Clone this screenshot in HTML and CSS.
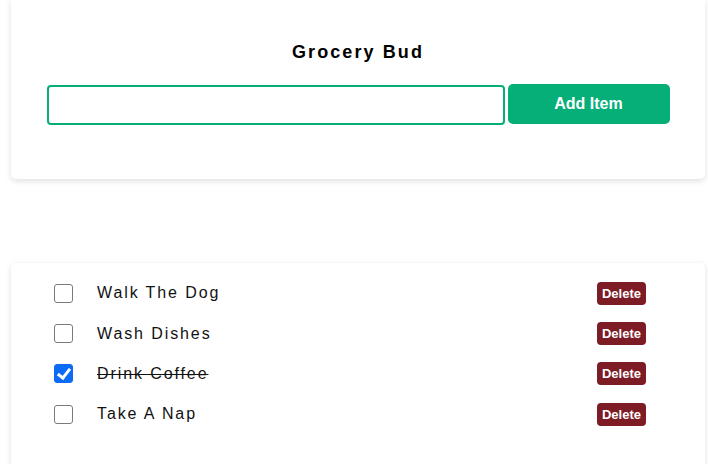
FILE: index.html
```html
<!DOCTYPE html>
<html>
<head>
<meta charset="utf-8">
<link rel="stylesheet" href="styles.css">
</head>
<body>
<main class="app">
  <section class="card top-card">
    <h1 class="title">Grocery Bud</h1>
    <form class="form">
      <input class="field" type="text">
      <button class="add-btn" type="button">Add Item</button>
    </form>
  </section>
  <section class="card list-card">
    <div class="row">
      <input class="check" type="checkbox">
      <span class="name">Walk The Dog</span>
      <button class="del-btn" type="button">Delete</button>
    </div>
    <div class="row">
      <input class="check" type="checkbox">
      <span class="name">Wash Dishes</span>
      <button class="del-btn" type="button">Delete</button>
    </div>
    <div class="row">
      <input class="check" type="checkbox" checked>
      <span class="name done">Drink Coffee</span>
      <button class="del-btn" type="button">Delete</button>
    </div>
    <div class="row">
      <input class="check" type="checkbox">
      <span class="name">Take A Nap</span>
      <button class="del-btn" type="button">Delete</button>
    </div>
  </section>
</main>
</body>
</html>
```

FILE: styles.css
```css
html, body {
  margin: 0;
  padding: 0;
  background: #fff;
  font-family: "Liberation Sans", Arial, sans-serif;
  color: #111;
  overflow: hidden;
}

.app {
  width: 694px;
  margin-left: 11px;
  display: flex;
  flex-direction: column;
  gap: 84px;
}

.card {
  background: #fff;
  border-radius: 5px;
  box-shadow: 0 2px 6px rgba(0, 0, 0, 0.13);
}

.top-card {
  height: 179px;
  box-sizing: border-box;
  padding-top: 41px;
  border-top-left-radius: 0;
  border-top-right-radius: 0;
}

.title {
  margin: 0;
  text-align: center;
  font-size: 18px;
  line-height: 22px;
  font-weight: bold;
  letter-spacing: 2.1px;
  color: #000;
}

.form {
  width: 623px;
  margin: 21px auto 0;
  display: flex;
  align-items: flex-start;
  gap: 3px;
}

.field {
  flex: 1;
  height: 40px;
  margin-top: 1px;
  box-sizing: border-box;
  border: 2px solid #06ad78;
  border-radius: 4px;
  padding: 0 8px;
  font-family: inherit;
  font-size: 15px;
  outline: none;
  background: #fff;
}

.add-btn {
  width: 162px;
  height: 40px;
  border: none;
  border-radius: 5px;
  background: #06ae78;
  color: #fff;
  font-family: inherit;
  font-size: 16px;
  font-weight: bold;
  padding: 0;
}

.list-card {
  padding: 10px 59px 40px 43px;
  border-bottom-left-radius: 0;
  border-bottom-right-radius: 0;
}

.row {
  display: flex;
  align-items: center;
  height: 40.4px;
}

.check {
  -webkit-appearance: none;
  appearance: none;
  width: 19px;
  height: 19px;
  margin: 0 24px 0 0;
  box-sizing: border-box;
  border: 1px solid #7a7a7a;
  border-radius: 3px;
  background: #fff;
  position: relative;
  flex: none;
}

.check:checked {
  background: #0b6bf7;
  border-color: #0b6bf7;
}

.check:checked::after {
  content: "";
  position: absolute;
  left: 5px;
  top: 1px;
  width: 5px;
  height: 10px;
  border: solid #fff;
  border-width: 0 3px 3px 0;
  transform: rotate(38deg);
}

.name {
  flex: 1;
  font-size: 16px;
  letter-spacing: 1.9px;
  color: #111;
}

.name.done {
  text-decoration: line-through;
}

.del-btn {
  height: 23px;
  padding: 0 5px;
  border: none;
  border-radius: 4px;
  background: #7e1c26;
  color: #fff;
  font-family: inherit;
  font-size: 13px;
  font-weight: bold;
}
```
